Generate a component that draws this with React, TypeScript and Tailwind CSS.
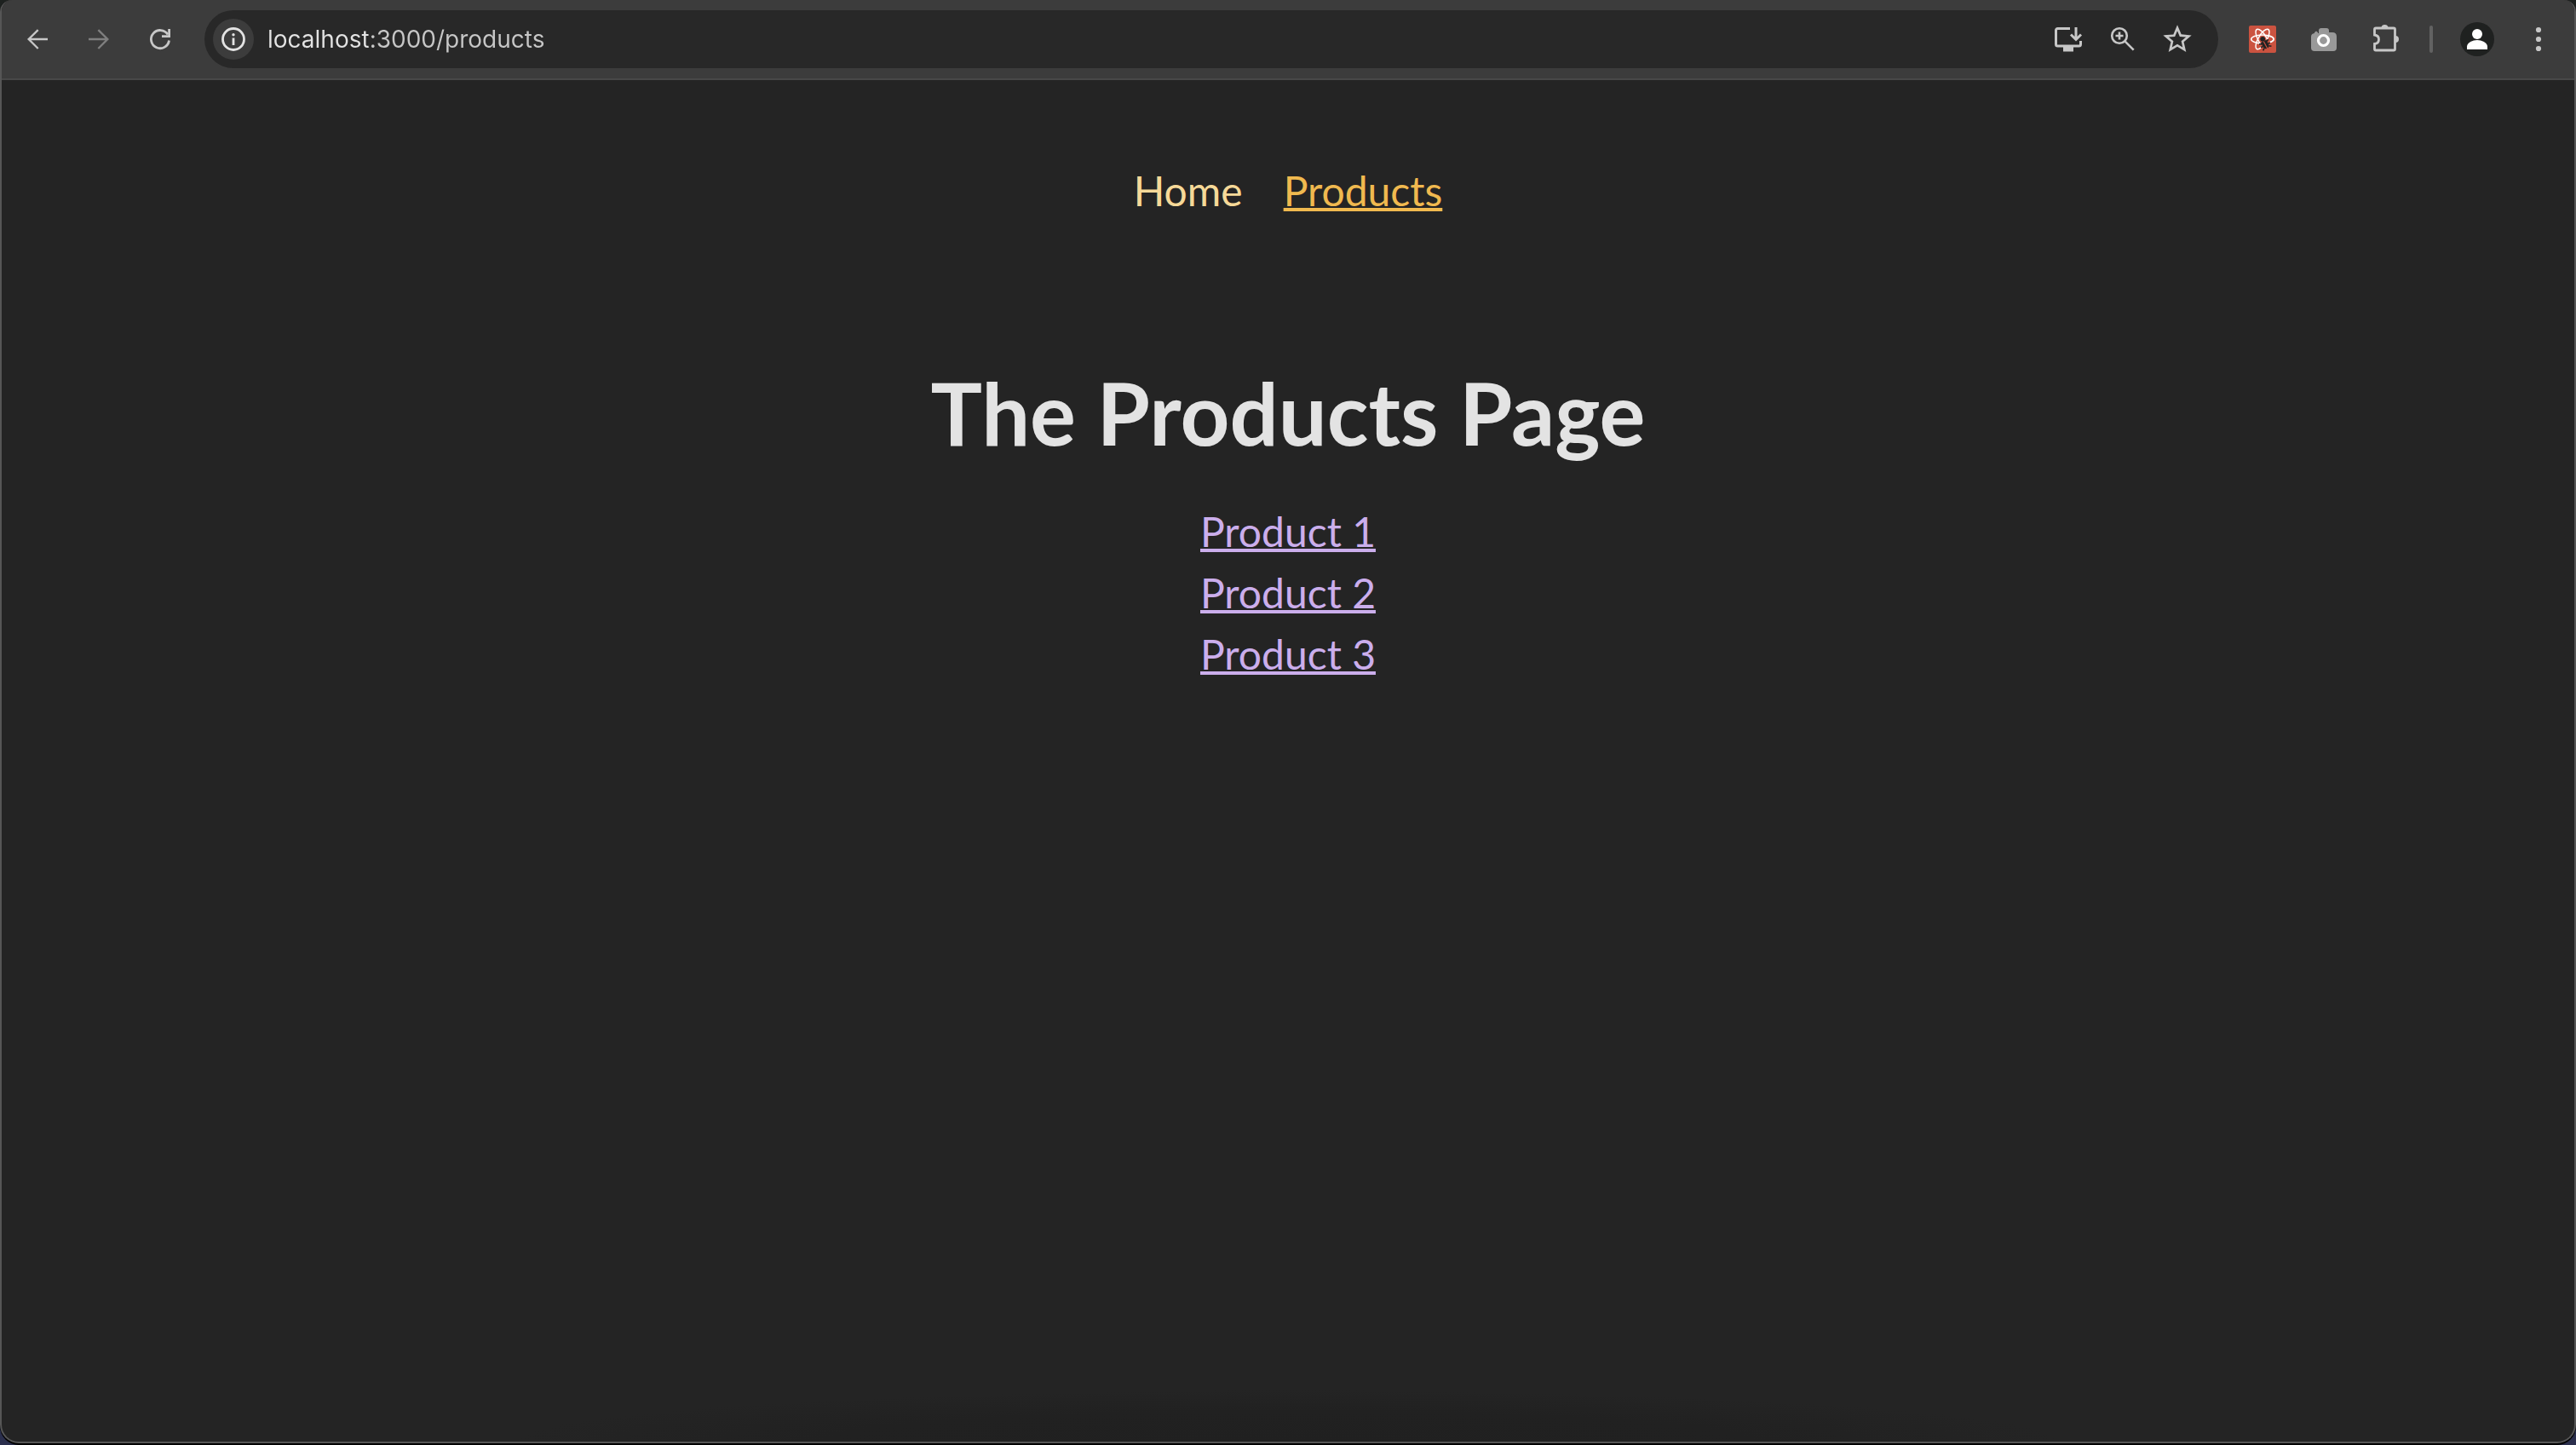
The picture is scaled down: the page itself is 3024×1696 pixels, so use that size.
import type { ReactNode } from "react";

function ToolButton({ label, children, dim }: { label: string; children: ReactNode; dim?: boolean }) {
  return (
    <button
      type="button"
      aria-label={label}
      disabled={dim}
      className={`flex size-12 shrink-0 items-center justify-center rounded-full ${dim ? "text-[#7f7f7f]" : "text-[#c7c7c7]"}`}
    >
      {children}
    </button>
  );
}

const ReactDevIcon = () => (
  <svg className="size-8" viewBox="0 0 32 32" fill="none">
    <rect width="32" height="32" rx="2" fill="#cb5340" />
    <g stroke="#fff" strokeWidth="1.500">
      <ellipse cx="16" cy="16" rx="13.3" ry="5" />
      <ellipse cx="16" cy="16" rx="13.3" ry="5" transform="rotate(60 16 16)" />
      <ellipse cx="16" cy="16" rx="13.3" ry="5" transform="rotate(120 16 16)" />
    </g>
    <path d="M13.500 19l10-3.500 5 11-9 4-5-4z" fill="#cb5340" />
    <path d="M18 11.500q11 .5 11 4.500 0 2-4.500 3.700" stroke="#fff" strokeWidth="1.500" />
    <circle cx="16.2" cy="15.8" r="2.9" fill="#222" />
    <g transform="rotate(-28 19 22)">
      <path d="M15.500 18h3v9.500c-2-.5-3-2-3-4.500zM19.700 18h3v5c0 2.500-1 4-3 4.500z" fill="#222" />
      <path d="M15.500 20l-2.500-1.500M15.500 23H13M16 25.500l-2.500 2M22.500 20l2.500-1.500M22.500 23H25M22 25.500l2.500 2" stroke="#222" strokeWidth="1.600" />
    </g>
  </svg>
);

const products = ["Product 1", "Product 2", "Product 3"];

function Toolbar() {
  return (
    <header className="flex items-center gap-7 border-b-2 border-[#484848] bg-[#3c3c3c] px-[18px] pt-3 pb-3">
      <div className="flex gap-6">
        <ToolButton label="Back">
          <svg className="size-9" viewBox="0 0 24 24" fill="currentColor">
            <path d="M20 11.200H7.050l5.950-5.950L11.900 4.100 4 12l7.900 7.900 1.100-1.150-5.950-5.950H20z" />
          </svg>
        </ToolButton>
        <ToolButton label="Forward" dim>
          <svg className="size-9" viewBox="0 0 24 24" fill="currentColor">
            <path d="M4 11.200h12.950L11 5.250l1.100-1.150L20 12l-7.900 7.900-1.100-1.150 5.950-5.950H4z" />
          </svg>
        </ToolButton>
        <ToolButton label="Reload">
          <svg className="size-9" viewBox="0 0 36 36" fill="none" stroke="currentColor" strokeWidth="2.800">
            <path d="M28.500 19.500A10.600 10.600 0 1 1 27 12.500" />
            <path d="M28.600 6v8.600H20" />
          </svg>
        </ToolButton>
      </div>

      <div className="flex h-[68px] min-w-0 grow items-center rounded-full bg-[#282828] pr-6 pl-2.5">
        <button
          type="button"
          aria-label="View site information"
          className="flex size-12 shrink-0 items-center justify-center rounded-full bg-[#3c3c3c] text-[#e3e3e3]"
        >
          <svg className="size-7" viewBox="0 0 28 28" fill="none">
            <circle cx="14" cy="14" r="12.500" stroke="currentColor" strokeWidth="2.800" />
            <circle cx="14" cy="8.800" r="1.700" fill="currentColor" />
            <path d="M14 12.500v8.500" stroke="currentColor" strokeWidth="2.800" />
          </svg>
        </button>
        <input
          type="text"
          aria-label="Address"
          defaultValue="localhost:3000/products"
          className="ml-4 min-w-0 grow bg-[linear-gradient(90deg,#e3e3e3_118px,#c7c7c7_118px)] bg-clip-text font-['Inter',sans-serif] text-[28px] leading-9 text-transparent caret-white outline-none"
        />
        <div className="flex gap-4">
          <ToolButton label="Install app">
            <svg className="h-8 w-[34px]" viewBox="0 0 34 32" fill="none" stroke="currentColor" strokeWidth="3">
              <path d="M19 3.500H4.500a2 2 0 0 0-2 2v16.500a2 2 0 0 0 2 2h25a2 2 0 0 0 2-2V18" />
              <path d="M26 2v13M20 10.500l6 6 6-6" />
              <path d="M11 24.500h12v6H11z" fill="currentColor" stroke="none" />
            </svg>
          </ToolButton>
          <ToolButton label="Zoom">
            <svg className="size-8" viewBox="0 0 32 32" fill="none" stroke="currentColor" strokeWidth="2.600">
              <circle cx="12" cy="12" r="8.800" />
              <path d="M18.200 18.200l10.500 10.500M12 7.500v9M7.500 12h9" />
            </svg>
          </ToolButton>
          <ToolButton label="Bookmark this page">
            <svg className="size-10" viewBox="0 0 24 24" fill="currentColor">
              <path d="M22 9.240l-7.190-.62L12 2 9.190 8.630 2 9.240l5.460 4.730L5.820 21 12 17.270 18.180 21l-1.630-7.030L22 9.240zM12 15.400l-3.760 2.270 1-4.280-3.320-2.880 4.380-.38L12 6.100l1.710 4.040 4.380.38-3.320 2.880 1 4.280L12 15.400z" />
            </svg>
          </ToolButton>
        </div>
      </div>

      <div className="flex gap-6">
        <ToolButton label="React Developer Tools">
          <ReactDevIcon />
        </ToolButton>
        <ToolButton label="Screenshot">
          <svg className="size-8" viewBox="0 0 32 32">
            <path
              d="M5 9V8l2-1.500L9 8v1h1V6q0-3 3-3h6q3 0 3 3v2h4q5 0 5 5v13q0 4-4 4H5q-4 0-4-4V13q0-3.500 4-4z"
              fill="#999"
            />
            <circle cx="15.500" cy="17.500" r="6" fill="#999" stroke="#fff" strokeWidth="3.200" />
          </svg>
        </ToolButton>
        <ToolButton label="Extensions">
          <svg className="h-9 w-9" viewBox="0 0 36 36" fill="none">
            <path
              d="M5.500 6.500q0-1.500 1.500-1.500H28q1.500 0 1.500 1.500V29.500q0 1.500-1.500 1.500H7q-1.500 0-1.500-1.500V23.500q5-.5 5-5.200t-5-5.300z"
              stroke="currentColor"
              strokeWidth="2.800"
            />
            <path d="M13.500 5a4 4 0 0 1 8 0zM30 14a4 4 0 0 1 0 8z" fill="currentColor" />
          </svg>
        </ToolButton>
      </div>
      <div className="h-8 w-1 shrink-0 rounded-full bg-[#626262]" />
      <div className="flex gap-6">
        <ToolButton label="Profile">
          <svg className="size-10" viewBox="0 0 40 40">
            <circle cx="20" cy="20" r="20" fill="#1f2120" />
            <circle cx="20" cy="14" r="6" fill="#fff" />
            <path d="M8 32v-3.500C8 24 15 21 20 21s12 3 12 7.500V32z" fill="#fff" />
          </svg>
        </ToolButton>
        <ToolButton label="Menu">
          <svg className="size-8" viewBox="0 0 32 32" fill="currentColor">
            <circle cx="16" cy="5" r="3.100" />
            <circle cx="16" cy="16" r="3.100" />
            <circle cx="16" cy="27" r="3.100" />
          </svg>
        </ToolButton>
      </div>
    </header>
  );
}

export default function App() {
  return (
    <div className="flex min-h-screen flex-col bg-linear-to-b from-[#1d211f] to-[#2b2f4d]">
      <div className="flex grow flex-col rounded-t-[14px] rounded-b-[22px] bg-black pb-0.5">
        <div className="flex grow flex-col overflow-hidden rounded-t-[14px] rounded-b-[22px] border-2 border-t-0 border-[#565656] bg-[#242424] bg-[radial-gradient(30%_60px_at_50%_100%,#202020,#212121_60%,#242424)]">
          <Toolbar />
          <div className="flex flex-col items-center font-['Lato',sans-serif] text-[48px] leading-[72px] font-normal">
            <nav className="mt-[94px] flex gap-12">
              <a href="#home" className="text-[#f6d998]">
                Home
              </a>
              <a href="#products" className="text-[#f0b94f] underline decoration-4 underline-offset-2">
                Products
              </a>
            </nav>
            <main className="mt-[158px] flex flex-col items-center">
              <h1 className="text-[101px] leading-[132px] font-bold text-[#e3e3e3]">The Products Page</h1>
              <ul className="mt-[38px] text-center">
                {products.map((name) => (
                  <li key={name}>
                    <a href="#product" className="text-[#cbaeec] underline decoration-4 underline-offset-2">
                      {name}
                    </a>
                  </li>
                ))}
              </ul>
            </main>
          </div>
        </div>
      </div>
    </div>
  );
}
